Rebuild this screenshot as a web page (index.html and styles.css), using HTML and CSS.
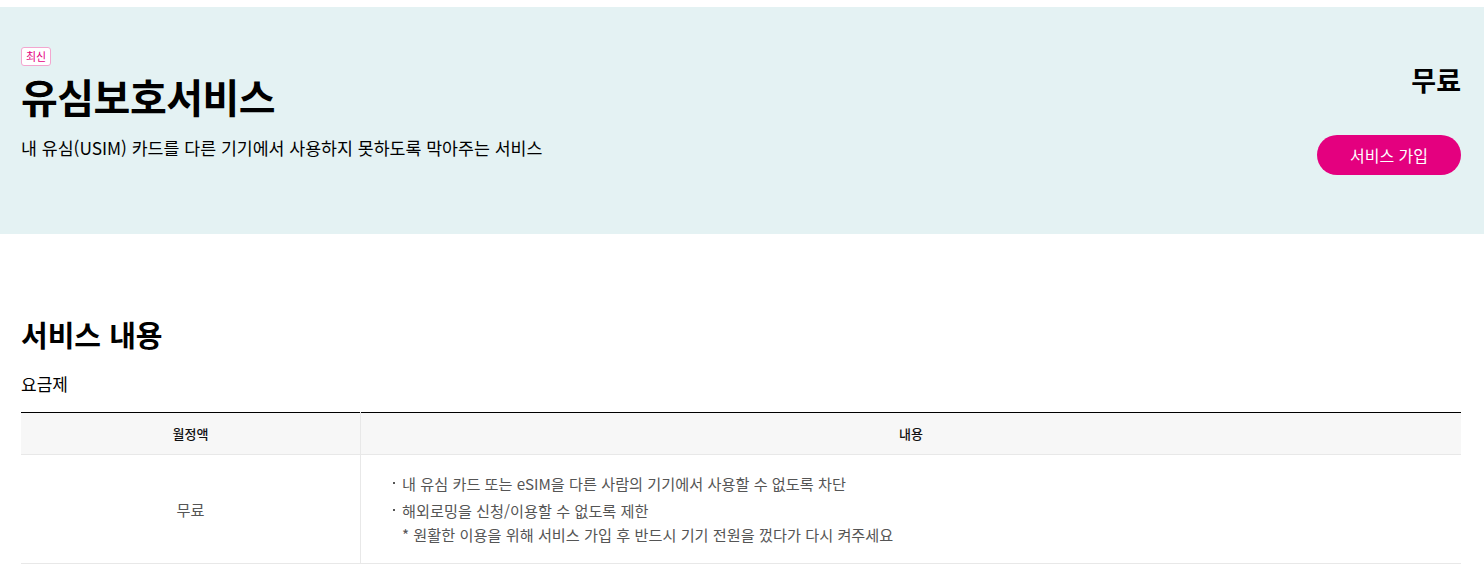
FILE: index.html
```html
<!DOCTYPE html>
<html lang="ko">
<head>
<meta charset="utf-8">
<title>유심보호서비스</title>
<link rel="stylesheet" href="styles.css">
</head>
<body>
<section class="hero">
  <div class="hero-inner">
    <div class="hero-main">
      <span class="badge">최신</span>
      <h1 class="title">유심보호서비스</h1>
      <p class="desc">내 유심(USIM) 카드를 다른 기기에서 사용하지 못하도록 막아주는 서비스</p>
    </div>
    <div class="hero-side">
      <div class="price">무료</div>
      <button class="join-btn" type="button">서비스 가입</button>
    </div>
  </div>
</section>
<section class="content">
  <h2 class="section-title">서비스 내용</h2>
  <h3 class="sub-title">요금제</h3>
  <table class="fee-table">
    <thead>
      <tr>
        <th class="col-fee">월정액</th>
        <th>내용</th>
      </tr>
    </thead>
    <tbody>
      <tr>
        <td class="fee">무료</td>
        <td class="detail">
          <ul class="detail-list">
            <li>내 유심 카드 또는 eSIM을 다른 사람의 기기에서 사용할 수 없도록 차단</li>
            <li>해외로밍을 신청/이용할 수 없도록 제한<br><span class="note">* 원활한 이용을 위해 서비스 가입 후 반드시 기기 전원을 껐다가 다시 켜주세요</span></li>
          </ul>
        </td>
      </tr>
    </tbody>
  </table>
</section>
</body>
</html>
```

FILE: styles.css
```css
html, body {
  margin: 0;
  padding: 0;
  background: #fff;
}
body {
  font-family: "Noto Sans CJK KR", "Noto Sans", sans-serif;
  color: #000;
  padding-top: 7px;
}
.hero {
  background: #e4f2f3;
  height: 227px;
  box-sizing: border-box;
  padding: 40px 23px 0 21px;
}
.hero-inner {
  display: flex;
  justify-content: space-between;
  align-items: flex-start;
}
.hero-main {
  display: flex;
  flex-direction: column;
  align-items: flex-start;
}
.badge {
  display: inline-block;
  font-size: 11px;
  line-height: 15px;
  padding: 1px 4px;
  color: #e4007f;
  background: #fff;
  border: 1px solid #f3a6cf;
  border-radius: 3px;
}
.title {
  margin: 4px 0 0;
  font-size: 40px;
  font-weight: 700;
  line-height: 52px;
  letter-spacing: -0.5px;
}
.desc {
  margin: 14px 0 0;
  font-size: 17.3px;
  line-height: 24px;
}
.hero-side {
  display: flex;
  flex-direction: column;
  align-items: flex-end;
  padding-top: 15px;
}
.price {
  font-size: 27px;
  font-weight: 700;
  line-height: 36px;
}
.join-btn {
  margin-top: 37px;
  width: 144px;
  height: 40px;
  border: 0;
  border-radius: 20px;
  background: #e4007f;
  color: #fff;
  font-family: inherit;
  font-size: 16px;
  padding: 0;
  cursor: pointer;
}
.content {
  padding: 80px 23px 0 21px;
}
.section-title {
  margin: 0;
  font-size: 29px;
  font-weight: 700;
  line-height: 40px;
}
.sub-title {
  margin: 17px 0 0;
  font-size: 17px;
  font-weight: 400;
  line-height: 26px;
}
.fee-table {
  margin-top: 15px;
  width: 100%;
  border-collapse: collapse;
  border-top: 1px solid #000;
}
.fee-table th {
  background: #f7f7f7;
  font-size: 13px;
  font-weight: 500;
  height: 41px;
  padding: 0;
  border-bottom: 1px solid #e8e8e8;
  color: #111;
}
.fee-table .col-fee {
  width: 339px;
  border-right: 1px solid #e8e8e8;
}
.fee-table td {
  border-bottom: 1px solid #e8e8e8;
  font-size: 15.2px;
  color: #555;
  padding: 0;
}
.fee-table td.fee {
  text-align: center;
  border-right: 1px solid #e8e8e8;
}
.fee-table td.detail {
  padding: 16px 0 17px 31px;
}
.detail-list {
  list-style: none;
  margin: 0;
  padding: 0;
}
.detail-list li {
  position: relative;
  padding-left: 10px;
  line-height: 24px;
}
.detail-list li + li {
  margin-top: 3px;
}
.detail-list li::before {
  content: "";
  position: absolute;
  left: 1px;
  top: 11px;
  width: 2px;
  height: 2px;
  background: #555;
}
.note {
  display: inline-block;
}
```
